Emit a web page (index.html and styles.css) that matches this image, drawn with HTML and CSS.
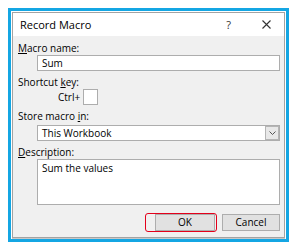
FILE: index.html
```html
<!DOCTYPE html>
<html lang="en">
<head>
    <meta charset="UTF-8">
    <title>Record Macro</title>
    <link rel="stylesheet" href="styles.css">
</head>
<body>
    <div class="frame">
        <div class="dialog">
            <div class="title-bar">
                <span class="title">Record Macro</span>
                <span class="help">?</span>
                <svg class="close" width="9" height="9" viewBox="0 0 9 9">
                    <path d="M0.5 0.5 L8.5 8.5 M8.5 0.5 L0.5 8.5" stroke="#333" stroke-width="1.1" fill="none"/>
                </svg>
            </div>

            <div class="content">
                <p class="label label-first"><u>M</u>acro name:</p>
                <div class="field">Sum</div>

                <p class="label">Shortcut <u>k</u>ey:</p>
                <div class="ctrl-row">
                    <span>Ctrl+</span>
                    <div class="key-box"></div>
                </div>

                <p class="label">Store macro <u>i</u>n:</p>
                <div class="field select">
                    <span>This Workbook</span>
                    <div class="drop-btn">
                        <svg width="7" height="4" viewBox="0 0 7 4">
                            <path d="M0.5 0.5 L3.5 3.5 L6.5 0.5" stroke="#555" stroke-width="1" fill="none"/>
                        </svg>
                    </div>
                </div>

                <p class="label"><u>D</u>escription:</p>
                <div class="field area">Sum the values</div>

                <div class="buttons">
                    <div class="highlight">
                        <div class="btn btn-ok">OK</div>
                    </div>
                    <div class="btn btn-cancel">Cancel</div>
                </div>
            </div>
        </div>
    </div>
</body>
</html>
```

FILE: styles.css
```css
* {
    box-sizing: border-box;
    font-family: "Open Sans", "Noto Sans", sans-serif;
}

body {
    margin: 0;
    background-color: #ffffff;
}

.frame {
    margin: 8px 0 0 8px;
    width: 281px;
    height: 234px;
    border: 3px solid #14a6e3;
    padding: 1px;
    background-color: #ffffff;
}

.dialog {
    height: 100%;
    border: 1px solid #a3a3a3;
    box-shadow: 0 1px 0 #c8c8c8;
    background-color: #f0f0f0;
    display: flex;
    flex-direction: column;
}

.title-bar {
    height: 23px;
    background-color: #ffffff;
    display: flex;
    align-items: center;
    padding: 0 13px 0 7px;
}

.title {
    font-size: 11px;
    color: #000;
    flex: 1;
}

.help {
    font-size: 11px;
    color: #333;
    margin-right: 31px;
}

.content {
    flex: 1;
    padding: 0 4px 0 5px;
    font-size: 10px;
    color: #000;
}

.label {
    margin: 4px 0 0 0;
    height: 14px;
    line-height: 14px;
}

.label-first {
    margin-top: 5px;
}

.label u {
    text-decoration-thickness: 1px;
    text-underline-offset: 1px;
}

.field {
    margin-left: 19px;
    height: 16px;
    line-height: 14px;
    border: 1px solid #adadad;
    background-color: #ffffff;
    padding: 0 4px;
}

.ctrl-row {
    display: flex;
    align-items: center;
    height: 16px;
    margin-left: 40px;
    gap: 3px;
}

.key-box {
    width: 15px;
    height: 16px;
    border: 1px solid #adadad;
    background-color: #ffffff;
}

.select {
    display: flex;
    align-items: center;
    padding-right: 0;
    margin-top: 2px;
}

.select span {
    flex: 1;
}

.drop-btn {
    width: 14px;
    height: 14px;
    border: 1px solid #b5b5b5;
    background-color: #e8e8e8;
    display: flex;
    justify-content: center;
    align-items: center;
}

.area {
    height: 46px;
    padding-top: 1px;
}

.buttons {
    display: flex;
    justify-content: flex-end;
    align-items: center;
    margin-top: 8px;
    gap: 5px;
}

.highlight {
    width: 72px;
    height: 19px;
    border: 1.5px solid #e3001b;
    border-radius: 3px;
    display: flex;
    justify-content: flex-end;
    align-items: center;
    padding-right: 1px;
}

.btn {
    height: 17px;
    line-height: 15px;
    text-align: center;
    border: 1px solid #adadad;
    background-color: #e1e1e1;
    font-size: 10px;
}

.btn-ok {
    width: 60px;
}

.btn-cancel {
    width: 58px;
}
```
